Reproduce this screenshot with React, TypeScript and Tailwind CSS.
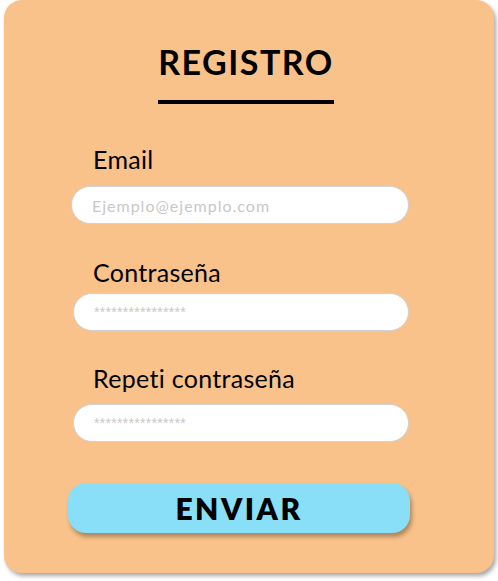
export default function App() {
  const fields = [
    { label: "Email", placeholder: "Ejemplo@ejemplo.com", labelMt: "mt-[40px]", inputCls: "mt-[12px] ml-[67px] w-[338px] text-[16px] tracking-[1px]" },
    { label: "Contraseña", placeholder: "****************", labelMt: "mt-[33px]", inputCls: "mt-[6px] ml-[69px] w-[336px] text-[14px] tracking-[0.3px] font-['Liberation_Sans',Arial,sans-serif]" },
    { label: "Repeti contraseña", placeholder: "****************", labelMt: "mt-[32px]", inputCls: "mt-[11px] ml-[69px] w-[336px] text-[14px] tracking-[0.3px] font-['Liberation_Sans',Arial,sans-serif]" },
  ];

  return (
    <div className="w-[498px] h-[581px] bg-white px-[4px]">
      <div
        className="w-[490px] h-[573px] rounded-[18px] bg-[#f9c28a] shadow-[2px_3px_4px_rgba(0,0,0,0.35)] flex flex-col"
        style={{ fontFamily: "Lato, 'Noto Sans', sans-serif" }}
      >
        {/* Title */}
        <div className="flex flex-col items-center pt-[42px] pr-[6px]">
          <h1 className="text-[34px] leading-[40px] font-bold tracking-[1.5px] text-black">
            REGISTRO
          </h1>
          <div className="mt-[18px] w-[176px] h-[4px] bg-black" />
        </div>

        {/* Fields */}
        {fields.map((f, i) => (
          <div key={i} className={`flex flex-col ${f.labelMt}`}>
            <label className="ml-[89px] text-[25px] leading-[30px] tracking-[0.3px] text-black">
              {f.label}
            </label>
            <input
              type="text"
              placeholder={f.placeholder}
              className={`${f.inputCls} h-[38px] rounded-full bg-white border border-[#cfd3d8] px-[20px] placeholder:text-[#c8c8c8] outline-none`}
            />
          </div>
        ))}

        {/* Submit */}
        <button className="ml-[64px] mt-[41px] w-[342px] h-[50px] rounded-[18px] bg-[#8adff8] shadow-[2px_4px_4px_rgba(0,0,0,0.3)] text-[30px] font-extrabold tracking-[2.5px] text-black">
          ENVIAR
        </button>
      </div>
    </div>
  );
}
